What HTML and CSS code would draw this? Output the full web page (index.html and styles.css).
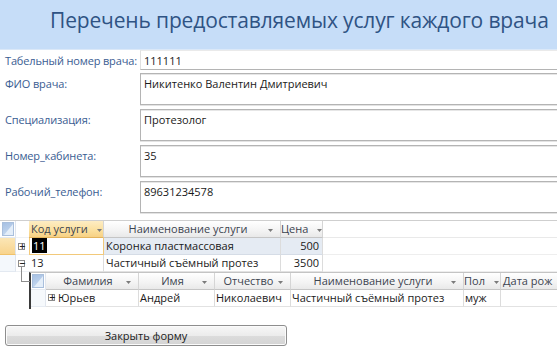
FILE: index.html
```html
<!DOCTYPE html>
<html lang="ru">
<head>
<meta charset="utf-8">
<link rel="stylesheet" href="styles.css">
</head>
<body>
<header class="form-head">
  <h1 class="title">Перечень предоставляемых услуг каждого врача</h1>
</header>
<section class="fields">
  <div class="field f-short">
    <div class="label">Табельный номер врача:</div>
    <div class="box">111111</div>
  </div>
  <div class="field">
    <div class="label">ФИО врача:</div>
    <div class="box">Никитенко Валентин Дмитриевич</div>
  </div>
  <div class="field">
    <div class="label">Специализация:</div>
    <div class="box">Протезолог</div>
  </div>
  <div class="field">
    <div class="label">Номер_кабинета:</div>
    <div class="box">35</div>
  </div>
  <div class="field">
    <div class="label">Рабочий_телефон:</div>
    <div class="box">89631234578</div>
  </div>
</section>

<section class="sheet">
  <div class="row hdr">
    <div class="sel"><span class="selall"></span></div>
    <div class="exp"></div>
    <div class="c c-code hcell active">Код услуги <span class="arr"><svg width="5" height="3" viewBox="0 0 5 3"><polygon points="0,0 5,0 2.5,3" fill="#7b7b7b"/></svg></span></div>
    <div class="c c-name hcell">Наименование услуги <span class="arr abs"><svg width="5" height="3" viewBox="0 0 5 3"><polygon points="0,0 5,0 2.5,3" fill="#7b7b7b"/></svg></span></div>
    <div class="c c-price hcell">Цена <span class="arr"><svg width="5" height="3" viewBox="0 0 5 3"><polygon points="0,0 5,0 2.5,3" fill="#7b7b7b"/></svg></span></div>
    <div class="fill"></div>
  </div>
  <div class="row cur">
    <div class="sel cur-sel"></div>
    <div class="exp"><span class="tog">+</span></div>
    <div class="c c-code cell white"><span class="hl">11</span></div>
    <div class="c c-name cell">Коронка пластмассовая</div>
    <div class="c c-price cell num">500</div>
    <div class="fill"></div>
  </div>
  <div class="row">
    <div class="sel"></div>
    <div class="exp"><span class="tog">−</span></div>
    <div class="c c-code cell">13</div>
    <div class="c c-name cell">Частичный съёмный протез</div>
    <div class="c c-price cell num">3500</div>
    <div class="fill"></div>
  </div>
  <div class="sub">
    <div class="row hdr">
      <div class="ssel"><span class="selall"></span></div>
      <div class="s-fam hcell">Фамилия <span class="arr abs"><svg width="5" height="3" viewBox="0 0 5 3"><polygon points="0,0 5,0 2.5,3" fill="#7b7b7b"/></svg></span></div>
      <div class="s-im hcell">Имя <span class="arr abs"><svg width="5" height="3" viewBox="0 0 5 3"><polygon points="0,0 5,0 2.5,3" fill="#7b7b7b"/></svg></span></div>
      <div class="s-ot hcell">Отчество <span class="arr abs"><svg width="5" height="3" viewBox="0 0 5 3"><polygon points="0,0 5,0 2.5,3" fill="#7b7b7b"/></svg></span></div>
      <div class="s-nm hcell">Наименование услуги <span class="arr abs"><svg width="5" height="3" viewBox="0 0 5 3"><polygon points="0,0 5,0 2.5,3" fill="#7b7b7b"/></svg></span></div>
      <div class="s-pol hcell">Пол <span class="arr"><svg width="5" height="3" viewBox="0 0 5 3"><polygon points="0,0 5,0 2.5,3" fill="#7b7b7b"/></svg></span></div>
      <div class="s-dt hcell left">Дата рож</div>
    </div>
    <div class="row">
      <div class="ssel"></div>
      <div class="s-exp"><span class="tog">+</span></div>
      <div class="s-fam2 cell">Юрьев</div>
      <div class="s-im cell">Андрей</div>
      <div class="s-ot cell">Николаевич</div>
      <div class="s-nm cell">Частичный съёмный протез</div>
      <div class="s-pol cell">муж</div>
      <div class="s-dt cell"></div>
    </div>
  </div>
</section>

<div class="actions">
  <button class="btn" type="button">Закрыть форму</button>
</div>
</body>
</html>
```

FILE: styles.css
```css
* { box-sizing: border-box; }
html, body { margin: 0; padding: 0; }
body {
  width: 557px;
  height: 349px;
  overflow: hidden;
  background: #ffffff;
  font-family: "Open Sans", "Noto Sans", sans-serif;
  font-size: 11px;
  color: #1a1a1a;
}

.form-head {
  height: 50px;
  background: #c6ddf8;
  border-bottom: 1px solid #dbe8f8;
  padding: 6px 0 0 50px;
}
.title {
  margin: 0;
  font-weight: 400;
  font-size: 21px;
  letter-spacing: -0.15px;
  line-height: 28px;
  color: #2f5384;
  white-space: nowrap;
}

.fields {
  display: flex;
  flex-direction: column;
  gap: 4px;
  padding-top: 0;
}
.field {
  display: grid;
  grid-template-columns: 140px 1fr;
  height: 32px;
}
.field.f-short { height: 20px; margin-bottom: -1px; }
.label {
  padding: 3px 0 0 5px;
  color: #3a5d92;
  white-space: nowrap;
  line-height: 15px;
  letter-spacing: -0.15px;
}
.box {
  border: 1px solid #b4b4b4;
  border-right: none;
  box-shadow: inset 0 1px 0 #e6e6e6, 0 1px 0 #e3e3e3;
  padding: 2px 0 0 3px;
  line-height: 15px;
  background: #fff;
  white-space: nowrap;
}
.f-short .box { border-top-color: #eaeaea; box-shadow: none; border-left-color: #e0e0e0; }

.sheet {
  margin-top: 7px;
  border-top: 1px solid #cfcfcf;
  position: relative;
}
.row {
  display: flex;
  height: 17px;
  line-height: 16px;
  white-space: nowrap;
}
.sel {
  width: 16px;
  flex: none;
  border-right: 1px solid #dfe5ee;
  border-bottom: 1px solid #e3e9f1;
  background: #f4f8fc;
  position: relative;
}
.cur-sel { background: linear-gradient(#fbe6b6, #f8d48d); border-bottom-color: #f0c26a; }
.hdr .sel { background: #fff; }
.selall {
  position: absolute;
  left: 2px; top: 1px;
  width: 12px; height: 14px;
  background: linear-gradient(160deg, #a7c1e3 0%, #bcd1ec 60%, #c9dbf0 100%);
  border: 1px solid #a9bfdc;
  overflow: hidden;
}
.selall::after {
  content: "";
  position: absolute;
  right: 0; bottom: 0;
  width: 0; height: 0;
  border-left: 9px solid transparent;
  border-bottom: 11px solid #e4eef9;
}
.exp {
  width: 13px;
  flex: none;
  position: relative;
  border-bottom: 1px solid #eef1f5;
}
.tog {
  position: absolute;
  left: 2px; top: 5px;
  width: 7px; height: 7px;
  border: 1px solid #8c8c8c;
  background: #fff;
  font-size: 8px;
  line-height: 5px;
  text-align: center;
  color: #222;
  font-family: "DejaVu Sans", sans-serif;
  font-weight: bold;
}
.c { flex: none; }
.c-code { width: 75px; }
.c-name { width: 177px; }
.c-price { width: 42px; }
.fill { flex: 1; border-bottom: 1px solid #eeeeee; }
.hdr .fill { border-bottom-color: #e9e9e9; }

.hcell {
  position: relative;
  background: linear-gradient(#ffffff, #f3f3f3 60%, #e9e9e9);
  border-right: 1px solid #d5d5d5;
  border-bottom: 1px solid #c5c5c5;
  color: #3c4450;
  text-align: center;
  padding-right: 8px;
}
.hcell.active {
  background: linear-gradient(#fdedc4, #fbdf9c 60%, #f7d184);
  border-bottom-color: #e3b35c;
  text-align: left;
  padding-left: 2px;
}
.hcell.left { text-align: left; padding-left: 2px; overflow: hidden; }
.arr { display: inline-block; vertical-align: middle; margin-left: 6px; line-height: 0; }
.arr.abs { position: absolute; right: 7px; top: 7px; margin: 0; }

.cell {
  border-right: 1px solid #dcdcdc;
  border-bottom: 1px solid #e2e2e2;
  padding-left: 2px;
  color: #1a1a1a;
}
.cur .cell { background: #e5ebf3; border-bottom-color: #d5dce6; }
.cur .cell.white { background: #fff; border: 1px solid #f2c97a; border-top: none; }
.num { text-align: right; padding-right: 3px; }
.hl { background: #000; color: #fff; padding: 0 1px; }

.sub {
  margin-left: 29px;
  border-left: 2px solid #3a3a3a;
  border-top: 1px solid #c4c4c4;
  position: relative;
  padding-bottom: 2px;
}
.sub::before {
  content: "";
  position: absolute;
  left: -10px; top: -7px;
  width: 8px; height: 15px;
  border-left: 1px solid #8c8c8c;
  border-bottom: 1px solid #8c8c8c;
}
.sub .row { height: 17px; }
.ssel {
  width: 15px;
  flex: none;
  position: relative;
  background: #f6f9fc;
  border-right: 1px solid #e1e6ee;
  border-bottom: 1px solid #e6ebf2;
}
.sub .hdr .ssel { background: #fff; }
.sub .selall { left: 1px; }
.s-exp { width: 11px; flex: none; position: relative; border-bottom: 1px solid #e2e2e2; }
.s-exp .tog { left: 2px; top: 4px; }
.s-fam { width: 93px; flex: none; }
.s-fam2 { width: 82px; flex: none; padding-left: 1px; }
.s-im { width: 76px; flex: none; padding-left: 0; }
.s-ot { width: 76px; flex: none; }
.s-nm { width: 173px; flex: none; }
.s-pol { width: 37px; flex: none; }
.s-dt { flex: 1; border-right: none; }
.sub .s-im.cell, .sub .s-ot.cell, .sub .s-nm.cell, .sub .s-pol.cell { padding-left: 1px; }

.actions { padding: 16px 0 0 5px; }
.btn {
  display: block;
  width: 282px;
  height: 21px;
  font-family: "Open Sans", "Noto Sans", sans-serif;
  font-size: 11px;
  color: #1a1a1a;
  background: linear-gradient(#f7f7f7, #ececec 50%, #dcdcdc 51%, #d4d4d4);
  border: 1px solid #8e8e8e;
  border-radius: 3px;
  box-shadow: inset 0 0 0 1px #fbfbfb;
  padding: 0;
  line-height: 18px;
}
```
